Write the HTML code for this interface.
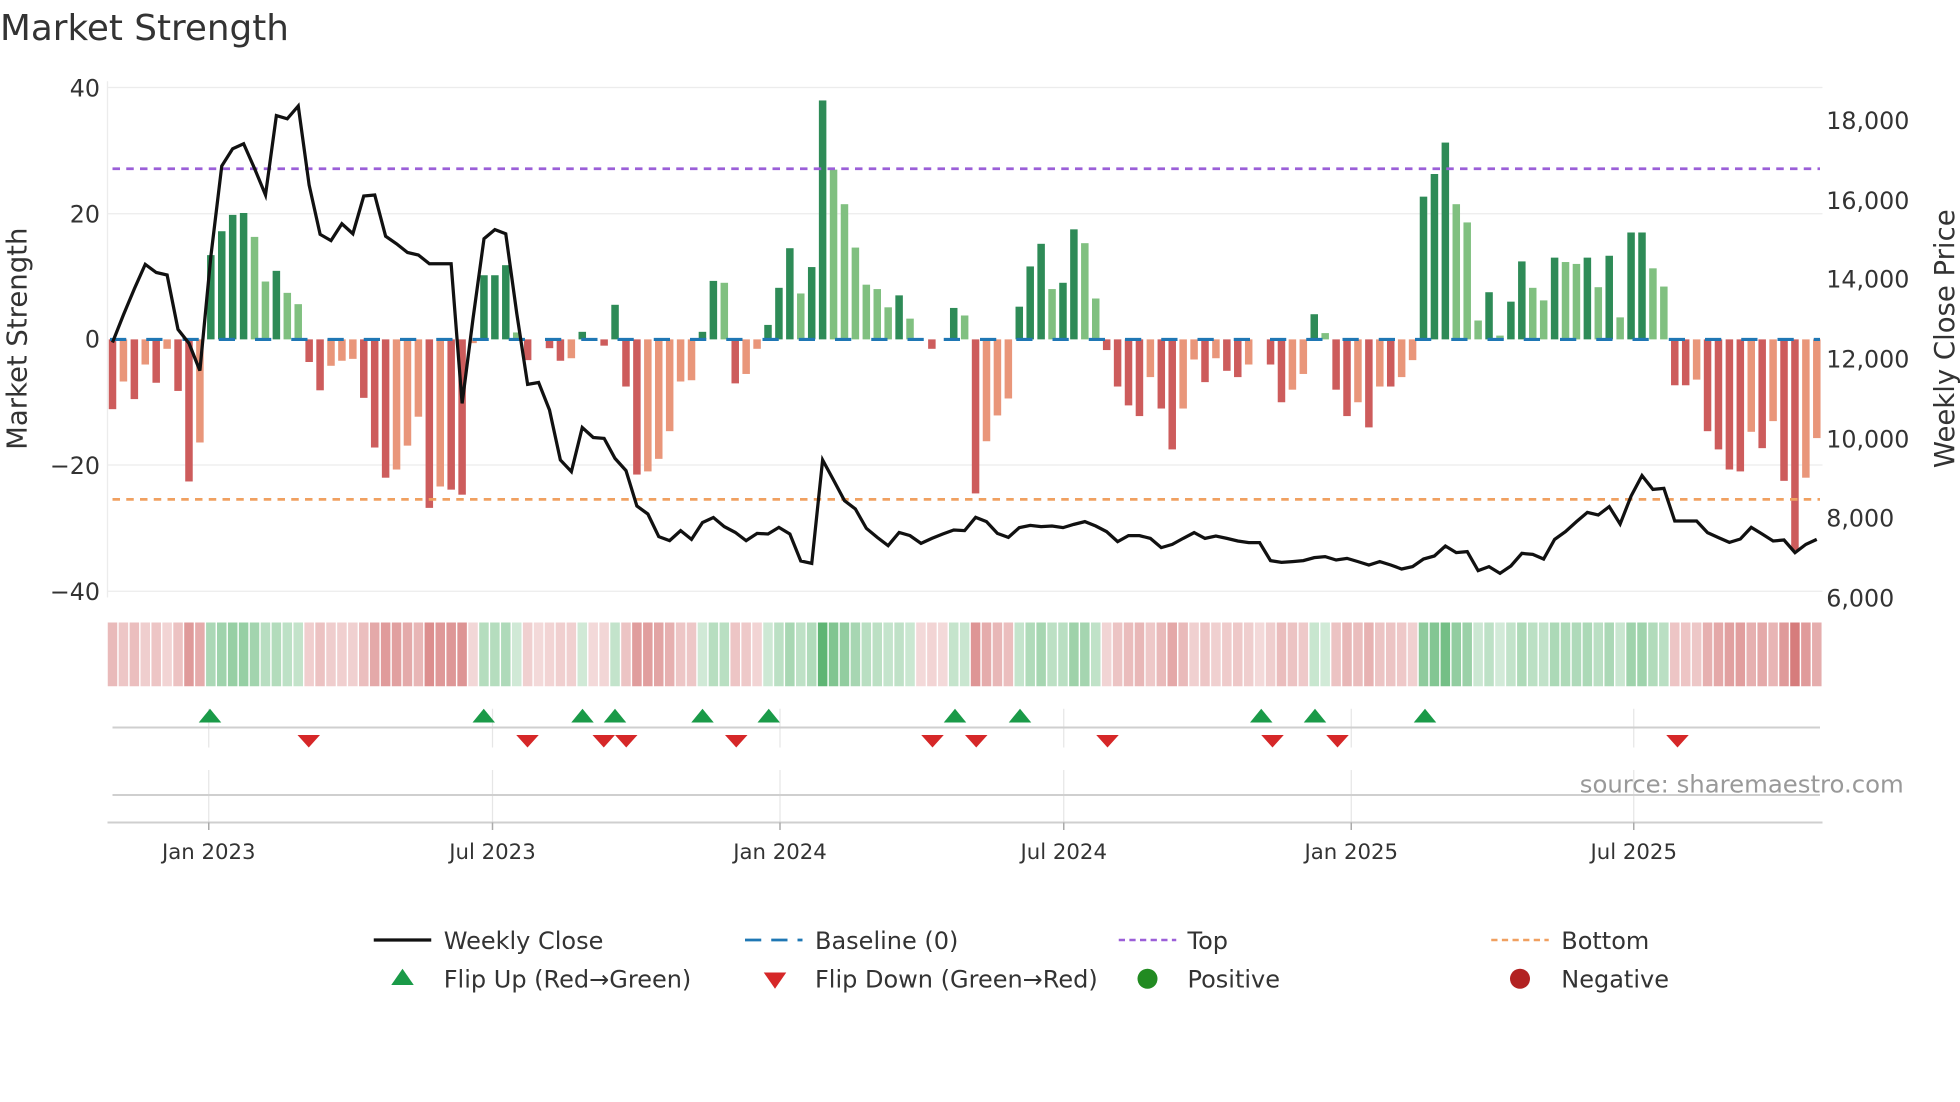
<!DOCTYPE html>
<html><head><meta charset="utf-8"><style>
html,body{margin:0;padding:0;background:#fff;width:1960px;height:1102px;overflow:hidden}
svg{display:block}
text{font-family:"DejaVu Sans","Liberation Sans",sans-serif;fill:#333}
</style></head><body>
<svg id="s" width="1960" height="1102" viewBox="0 0 1568 881.6" xmlns="http://www.w3.org/2000/svg">
<text x="0" y="32" font-size="28.6">Market Strength</text>
<g stroke="#ececec" stroke-width="1">
<line x1="86" y1="70" x2="1458" y2="70"/><line x1="86" y1="171" x2="1458" y2="171"/>
<line x1="86" y1="372" x2="1458" y2="372"/><line x1="86" y1="473" x2="1458" y2="473"/>
<line x1="86" y1="65" x2="86" y2="478"/>
</g>
<g font-size="19" text-anchor="end">
<text x="80" y="77">40</text><text x="80" y="178">20</text><text x="80" y="278">0</text>
<text x="80" y="379">−20</text><text x="80" y="480">−40</text>
</g>
<g font-size="19">
<text x="1461" y="103">18,000</text><text x="1461" y="167">16,000</text><text x="1461" y="230">14,000</text>
<text x="1461" y="294">12,000</text><text x="1461" y="358">10,000</text><text x="1461" y="421">8,000</text>
<text x="1461" y="485">6,000</text>
</g>
<text transform="translate(21,271) rotate(-90)" font-size="22" text-anchor="middle">Market Strength</text>
<text transform="translate(1563,271) rotate(-90)" font-size="22" text-anchor="middle">Weekly Close Price</text>
<g id="bars"></g>
<line x1="88" y1="271.5" x2="1456" y2="271.5" stroke="#1f77b4" stroke-width="2.5" stroke-dasharray="13 16"/>
<line x1="90" y1="135" x2="1456" y2="135" stroke="#9b5fd8" stroke-width="2.2" stroke-dasharray="6 5"/>
<line x1="90" y1="399.5" x2="1456" y2="399.5" stroke="#f0a060" stroke-width="2.2" stroke-dasharray="6 5"/>
<polyline id="price" fill="none" stroke="#111" stroke-width="2.6" stroke-linejoin="miter"/>
<g id="heat"></g>
<g stroke="#e6e6e6" stroke-width="1">
<line x1="167" y1="567" x2="167" y2="598"/><line x1="394" y1="567" x2="394" y2="598"/><line x1="624" y1="567" x2="624" y2="598"/>
<line x1="851" y1="567" x2="851" y2="598"/><line x1="1081" y1="567" x2="1081" y2="598"/><line x1="1307" y1="567" x2="1307" y2="598"/>
<line x1="167" y1="616" x2="167" y2="658"/><line x1="394" y1="616" x2="394" y2="658"/><line x1="624" y1="616" x2="624" y2="658"/>
<line x1="851" y1="616" x2="851" y2="658"/><line x1="1081" y1="616" x2="1081" y2="658"/><line x1="1307" y1="616" x2="1307" y2="658"/>
</g>
<g stroke="#cfcfcf" stroke-width="1.6">
<line x1="90" y1="582" x2="1456" y2="582"/><line x1="90" y1="636" x2="1456" y2="636"/>
<line x1="86" y1="658" x2="1458" y2="658"/>
</g>
<g stroke="#aaa" stroke-width="1.2">
<line x1="167" y1="658" x2="167" y2="664"/><line x1="394" y1="658" x2="394" y2="664"/><line x1="624" y1="658" x2="624" y2="664"/>
<line x1="851" y1="658" x2="851" y2="664"/><line x1="1081" y1="658" x2="1081" y2="664"/><line x1="1307" y1="658" x2="1307" y2="664"/>
</g>
<g id="flips"></g>
<text x="1523" y="634" font-size="19.5" text-anchor="end" style="fill:#999">source: sharemaestro.com</text>
<g font-size="17" text-anchor="middle">
<text x="167" y="687">Jan 2023</text><text x="394" y="687">Jul 2023</text><text x="624" y="687">Jan 2024</text>
<text x="851" y="687">Jul 2024</text><text x="1081" y="687">Jan 2025</text><text x="1307" y="687">Jul 2025</text>
</g>
<g font-size="19.2">
<line x1="299" y1="752" x2="345" y2="752" stroke="#111" stroke-width="2.6"/>
<text x="355" y="759">Weekly Close</text>
<line x1="596" y1="752" x2="642" y2="752" stroke="#1f77b4" stroke-width="2.2" stroke-dasharray="13 8"/>
<text x="652" y="759">Baseline (0)</text>
<line x1="895" y1="752" x2="941" y2="752" stroke="#9b5fd8" stroke-width="2" stroke-dasharray="5 3.5"/>
<text x="950" y="759">Top</text>
<line x1="1193" y1="752" x2="1239" y2="752" stroke="#f0a060" stroke-width="2" stroke-dasharray="5 3.5"/>
<text x="1249" y="759">Bottom</text>
<polygon points="313,788 331,788 322,775" fill="#1a9a48"/>
<text x="355" y="790">Flip Up (Red→Green)</text>
<polygon points="611,778 629,778 620,791" fill="#d62728"/>
<text x="652" y="790">Flip Down (Green→Red)</text>
<circle cx="918" cy="783" r="8" fill="#228b22"/>
<text x="950" y="790">Positive</text>
<circle cx="1216" cy="783" r="8" fill="#b22222"/>
<text x="1249" y="790">Negative</text>
</g>
</svg>
<script>
var V=[-11.1,-6.7,-9.5,-4,-6.9,-1.5,-8.2,-22.6,-16.4,13.4,17.2,19.8,20.1,16.3,9.2,10.9,7.4,5.6,-3.6,-8.1,-4.2,-3.4,-3.1,-9.3,-17.2,-22,-20.7,-16.9,-12.3,-26.8,-23.4,-23.9,-24.7,-0.6,10.2,10.2,11.8,1.1,-3.3,0,-1.4,
-3.4,-3,1.2,0,-1,5.5,-7.5,-21.5,-21,-19,-14.6,-6.7,-6.5,1.2,9.3,9,-7,-5.5,-1.5,2.3,8.2,14.5,7.3,11.5,38,27,21.5,14.6,8.7,8,5.1,7,3.3,0,-1.5,0,5,3.8,-24.5,
-16.2,-12.1,-9.4,5.2,11.6,15.2,8,9,17.5,15.3,6.5,-1.7,-7.5,-10.5,-12.2,-6,-11,-17.5,-11,-3.2,-6.8,-3,-5,-6,-4,0,-4,-10,-8,-5.5,4,1,-8,-12.2,-10,-14,-7.5,-7.5,-6,-3.3,22.7,
26.3,31.3,21.5,18.6,3,7.5,0.6,6,12.4,8.2,6.2,13,12.3,12,13,8.3,13.3,3.5,17,17,11.3,8.4,-7.3,-7.3,-6.4,-14.6,-17.5,-20.7,-21,-14.7,-17.3,-13,-22.5,-33.5,-22,-15.7];
var P=[274,252,231,211.5,218,220,263.5,274.7,296.5,205,132.8,119,115,134.7,156,92.5,95,84.8,148,187.5,192.5,179,187,156.8,156,189,195,202,204,211,211,211,322.7,255,191,183.7,187,250.7,307.5,306,
328,368,377.3,342,350,350.7,366.7,376.5,404.8,411.2,429.3,432.5,424.5,431.5,418,414,421.3,425.9,432.5,426.7,427.2,421.9,427.2,448.8,450.7,368,384,400.5,407.2,422.7,429.9,436.5,426,428.5,434.7,430.7,427.2,424,424.5,413.9,417.3,
426.7,429.9,422.1,420.3,421.3,420.8,422.1,419.5,417.3,420.8,425.3,433.3,428.5,428.5,430.7,438.1,435.5,430.7,426.1,430.7,428.8,430.7,432.8,434.1,434.1,448.5,449.9,449.3,448.5,446.1,445.3,448,446.7,449.3,452,449.3,452,455.2,453.3,447.2,
444.8,436.8,442.1,441.3,456.5,453.3,458.7,452.8,442.7,443.5,447.2,431.5,425.3,417.3,409.9,412,405.3,419.2,396.8,380.5,391.5,390.7,416.8,416.8,416.8,426.1,430.1,433.9,431.2,421.9,427.2,432.8,432,442.1,435.5,431.5];
var NS="http://www.w3.org/2000/svg",S=8.74,Z=271.5,U=5.03;
function el(t,a,p){var e=document.createElementNS(NS,t);for(var k in a)e.setAttribute(k,a[k]);p.appendChild(e);return e;}
var bars=document.getElementById('bars'),heat=document.getElementById('heat');
for(var i=0;i<V.length;i++){
 var v=V[i],x=90+S*i,pv=i?V[i-1]:0;
 var dark=(i==0)||(Math.sign(v)!=Math.sign(pv))||Math.abs(v)>=Math.abs(pv);
 var c=v>=0?(dark?'#2e8b57':'#80c080'):(dark?'#cd5c5c':'#e9967a');
 if(Math.abs(v)>0.05){var h=Math.abs(v)*U;el('rect',{x:x-3,y:v>0?Z-h:Z,width:6,height:h,fill:c},bars);}
 var a=0.22+0.6*Math.min(Math.abs(v)/38,1);
 var hc=v>0?'rgba(60,165,85,'+a+')':'rgba(200,80,80,'+a+')';
 el('rect',{x:x-3.8,y:498,width:7.6,height:51,fill:hc},heat);
}
var pts=[];for(var i=0;i<P.length;i++)pts.push((90+S*i).toFixed(1)+','+P[i]);
document.getElementById('price').setAttribute('points',pts.join(' '));
var fl=document.getElementById('flips');
[168,387,466,492,562,615,764,816,1009,1052,1140].forEach(function(x){el('polygon',{points:(x-9)+',578 '+(x+9)+',578 '+x+',567',fill:'#1a9a48'},fl);});
[247,422,483,501,589,746,781,886,1018,1070,1342].forEach(function(x){el('polygon',{points:(x-9)+',588 '+(x+9)+',588 '+x+',598',fill:'#d62728'},fl);});
</script>
</body></html>
